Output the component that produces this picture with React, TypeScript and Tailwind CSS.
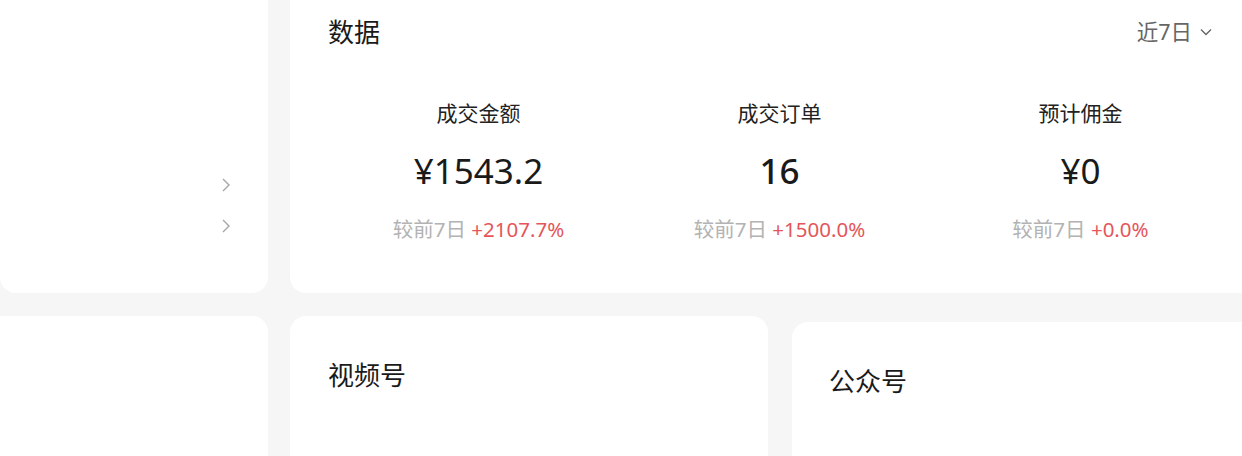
import React from 'react';

const font = { fontFamily: '"Noto Sans", "Noto Sans CJK SC", sans-serif' };

interface StatProps {
  label: string;
  value: string;
  delta: string;
  bold?: boolean;
}

const Chevron: React.FC<{ className?: string }> = ({ className }) => (
  <svg viewBox="0 0 10 16" className={className} fill="none" stroke="currentColor" strokeWidth="1.4">
    <path d="M2 2l6 6-6 6" />
  </svg>
);

/* ---------------- STAT ---------------- */
const Stat: React.FC<StatProps> = ({ label, value, delta, bold }) => (
  <div className="flex flex-col items-center">
    <div className="text-[21px] leading-[28px] text-[#222]">{label}</div>
    <div className={`mt-[22px] text-[35px] leading-[44px] text-[#1a1a1a] ${bold ? 'font-medium' : ''}`}>
      {value}
    </div>
    <div className="mt-[22px] text-[20.5px] leading-[28px]">
      <span className="text-[#b3b3b3]">较前7日 </span>
      <span className="text-[#e4565a]">{delta}</span>
    </div>
  </div>
);

const App: React.FC = () => {
  return (
    <div className="w-[1242px] h-[456px] overflow-hidden bg-[#f6f6f6] flex flex-col" style={font}>
      {/* TOP ROW */}
      <div className="flex gap-[22px] h-[293px] shrink-0">
        <div className="w-[268px] shrink-0 bg-white rounded-b-[16px] flex flex-col items-end pt-[177px] pr-[37px] gap-[25px] text-[#a6a6a6]">
          <Chevron className="w-[10px] h-[16px]" />
          <Chevron className="w-[10px] h-[16px]" />
        </div>

        <div className="w-[979px] shrink-0 bg-white rounded-bl-[16px] px-[38px] pt-[16px]">
          <div className="flex items-center justify-between pr-[19px]">
            <h2 className="text-[26px] leading-[32px] text-[#1a1a1a]">数据</h2>
            <div className="flex items-center gap-[8px] text-[21.5px] leading-[28px] text-[#666]">
              <span>近7日</span>
              <svg viewBox="0 0 12 8" className="w-[12px] h-[8px]" fill="none" stroke="currentColor" strokeWidth="1.4">
                <path d="M1 1.5l5 5 5-5" />
              </svg>
            </div>
          </div>

          <div className="grid grid-cols-3 mt-[51px]">
            <Stat label="成交金额" value="¥1543.2" delta="+2107.7%" />
            <Stat label="成交订单" value="16" delta="+1500.0%" bold />
            <Stat label="预计佣金" value="¥0" delta="+0.0%" />
          </div>
        </div>
      </div>

      {/* BOTTOM ROW */}
      <div className="flex mt-[23px] flex-1">
        <div className="w-[268px] shrink-0 bg-white rounded-tr-[16px]" />
        <div className="w-[478px] shrink-0 ml-[22px] bg-white rounded-t-[16px] pl-[38px] pt-[43px]">
          <h2 className="text-[26px] leading-[32px] text-[#1a1a1a]">视频号</h2>
        </div>
        <div className="flex-1 ml-[24px] mt-[6px] bg-white rounded-tl-[16px] pl-[37px] pt-[43px]">
          <h2 className="text-[26px] leading-[32px] text-[#1a1a1a]">公众号</h2>
        </div>
      </div>
    </div>
  );
};

export default App;
